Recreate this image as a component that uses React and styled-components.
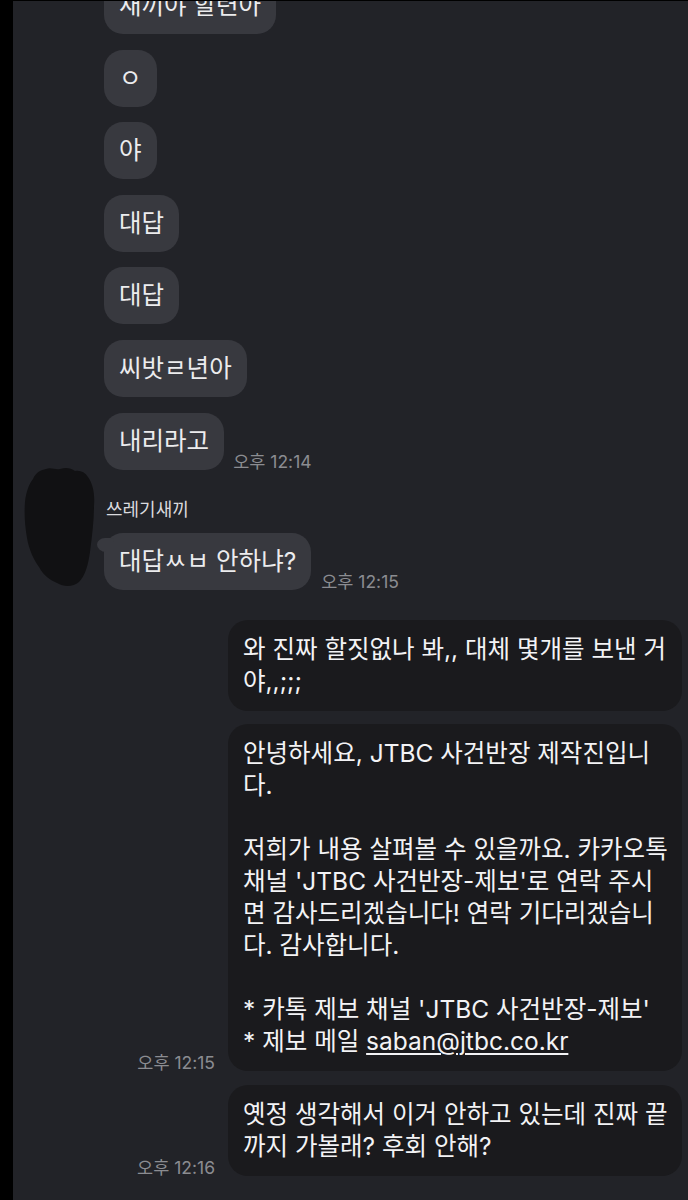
import React from 'react';
import styled, { createGlobalStyle } from 'styled-components';

// Global page reset

const GlobalStyle = createGlobalStyle`
  html, body {
    margin: 0;
    padding: 0;
    background: #000;
  }

  body {
    font-family: Inter, 'Noto Sans CJK KR', 'Noto Sans', sans-serif;
    -webkit-font-smoothing: antialiased;
  }
`;

// Scoped styles

const Screen = styled.main`
  box-sizing: border-box;
  width: 688px;
  height: 1200px;
  overflow: hidden;
  display: flex;
  flex-direction: column;
  background: #222328;
  border-left: 13px solid #000;
  border-top: 1px solid #000;
`;

const Incoming = styled.section`
  display: flex;
  flex-direction: column;
  align-items: flex-start;
  row-gap: 15.6px;
  padding-left: 91px;
  margin-top: -24px;
`;

const Row = styled.div`
  display: flex;
  align-items: flex-end;
  column-gap: ${({ $gap }) => $gap || 9}px;
  justify-content: ${({ $out }) => ($out ? 'flex-end' : 'flex-start')};
`;

const Bubble = styled.div`
  position: relative;
  box-sizing: border-box;
  padding: 12px 15px 13px;
  font-size: 24.5px;
  line-height: 32px;
  white-space: pre;
  color: #ececee;
  background: #38393f;
  border-radius: 19px;

  &::before {
    content: '';
    display: ${({ $tail }) => ($tail ? 'block' : 'none')};
    position: absolute;
    left: -7px;
    top: 5px;
    width: 17px;
    height: 14px;
    background: #38393f;
    border-radius: 60% 30% 0 70%;
  }
`;

const OutBubble = styled(Bubble)`
  width: 454px;
  padding: 13px 10px 14px 15px;
  color: #f3f3f5;
  background: #1a1a1d;
  border-radius: 20px;
`;

const Line = styled.div`
  white-space: pre;
`;

const Time = styled.span`
  font-size: 17.5px;
  line-height: 20px;
  color: #8b8c91;
  white-space: nowrap;
  margin-bottom: -2px;
`;

const Sender = styled.div`
  position: relative;
  display: flex;
  flex-direction: column;
  margin-top: 14.4px;
`;

const Redaction = styled.svg`
  position: absolute;
  left: -80px;
  top: -34px;
  width: 71px;
  height: 121px;
`;

const Name = styled.span`
  font-size: 18px;
  line-height: 20px;
  color: #dadade;
  padding-left: 2px;
  margin-bottom: 13px;
`;

const Outgoing = styled.section`
  display: flex;
  flex-direction: column;
  align-items: flex-end;
  row-gap: 13.5px;
  padding-right: 6px;
  margin-top: 30px;
`;

const Mail = styled.span`
  text-decoration: underline;
  text-decoration-thickness: 1.5px;
  text-underline-offset: 3px;
`;

// Data

const earlier = ['새끼야 할련아', 'ㅇ', '야', '대답', '대답', '씨밧ㄹ년아'];

const noticeBody =
  '안녕하세요, JTBC 사건반장 제작진입니\n다.\n\n저희가 내용 살펴볼 수 있을까요. 카카오톡\n채널 \'JTBC 사건반장-제보\'로 연락 주시\n면 감사드리겠습니다! 연락 기다리겠습니\n다. 감사합니다.\n\n* 카톡 제보 채널 \'JTBC 사건반장-제보\'';

// Main Component

const App = () => (
  <>
    <GlobalStyle />
    <Screen>
      <Incoming>
        {earlier.map((text, i) => (
          <Bubble key={i}>{text}</Bubble>
        ))}
        <Row>
          <Bubble>내리라고</Bubble>
          <Time>오후 12:14</Time>
        </Row>
        <Sender>
          <Redaction viewBox="0 0 71 121" aria-hidden="true">
            <path
              d="M9 13 C12 6 17 4 22 3 C27 1 31 4 36 3 C42 1 47 2 51 5 C56 4 61 6 64 11 C69 18 71 28 70 40 C70 55 68 70 66 86 C64 100 61 110 55 116 C49 121 40 121 33 117 C26 114 20 110 15 101 C10 94 5 84 3 72 C1 60 0 48 1 36 C2 26 5 18 9 13 Z"
              fill="#111113"
            />
          </Redaction>
          <Name>쓰레기새끼</Name>
          <Row $gap={10}>
            <Bubble $tail>대답ㅆㅂ 안하냐?</Bubble>
            <Time>오후 12:15</Time>
          </Row>
        </Sender>
      </Incoming>
      <Outgoing>
        <OutBubble>{'와 진짜 할짓없나 봐,, 대체 몇개를 보낸 거\n야,,;;;'}</OutBubble>
        <Row $out $gap={13}>
          <Time>오후 12:15</Time>
          <OutBubble>
            <Line>{noticeBody}</Line>
            <Line>
              {'* 제보 메일 '}
              <Mail>saban@jtbc.co.kr</Mail>
            </Line>
          </OutBubble>
        </Row>
        <Row $out $gap={13}>
          <Time>오후 12:16</Time>
          <OutBubble>{'옛정 생각해서 이거 안하고 있는데 진짜 끝\n까지 가볼래? 후회 안해?'}</OutBubble>
        </Row>
      </Outgoing>
    </Screen>
  </>
);

export default App;
